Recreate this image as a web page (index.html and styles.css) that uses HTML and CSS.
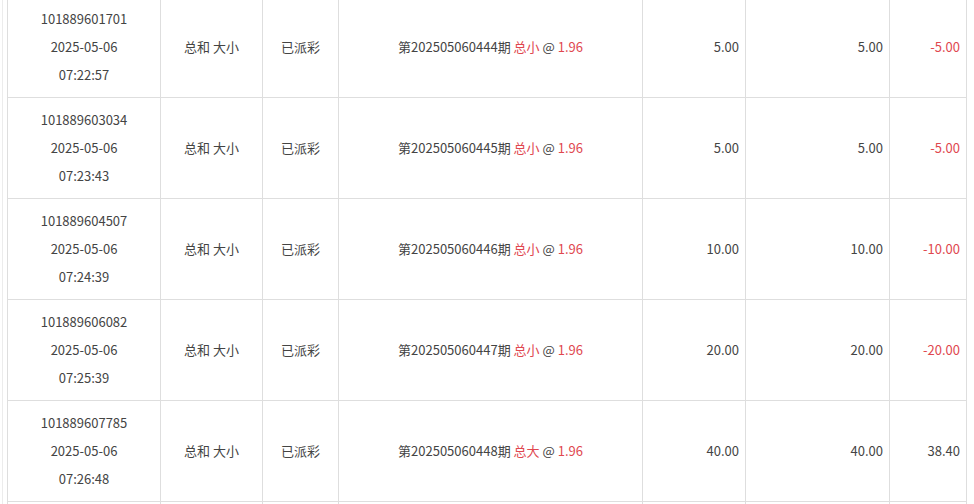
FILE: index.html
```html
<!DOCTYPE html>
<html lang="zh-CN">
<head>
<meta charset="utf-8">
<link rel="stylesheet" href="styles.css">
</head>
<body>
<div class="wrap">
<table class="bets">
<colgroup>
<col class="c1"><col class="c2"><col class="c3"><col class="c4"><col class="c5"><col class="c6"><col class="c7">
</colgroup>
<tbody>
<tr>
<td class="ctr"><div>101889601701</div><div>2025-05-06</div><div>07:22:57</div></td>
<td class="ctr">总和 大小</td>
<td class="ctr">已派彩</td>
<td class="ctr">第202505060444期 <span class="red">总小</span> @ <span class="red">1.96</span></td>
<td class="num">5.00</td>
<td class="num">5.00</td>
<td class="num red">-5.00</td>
</tr>
<tr>
<td class="ctr"><div>101889603034</div><div>2025-05-06</div><div>07:23:43</div></td>
<td class="ctr">总和 大小</td>
<td class="ctr">已派彩</td>
<td class="ctr">第202505060445期 <span class="red">总小</span> @ <span class="red">1.96</span></td>
<td class="num">5.00</td>
<td class="num">5.00</td>
<td class="num red">-5.00</td>
</tr>
<tr>
<td class="ctr"><div>101889604507</div><div>2025-05-06</div><div>07:24:39</div></td>
<td class="ctr">总和 大小</td>
<td class="ctr">已派彩</td>
<td class="ctr">第202505060446期 <span class="red">总小</span> @ <span class="red">1.96</span></td>
<td class="num">10.00</td>
<td class="num">10.00</td>
<td class="num red">-10.00</td>
</tr>
<tr>
<td class="ctr"><div>101889606082</div><div>2025-05-06</div><div>07:25:39</div></td>
<td class="ctr">总和 大小</td>
<td class="ctr">已派彩</td>
<td class="ctr">第202505060447期 <span class="red">总小</span> @ <span class="red">1.96</span></td>
<td class="num">20.00</td>
<td class="num">20.00</td>
<td class="num red">-20.00</td>
</tr>
<tr>
<td class="ctr"><div>101889607785</div><div>2025-05-06</div><div>07:26:48</div></td>
<td class="ctr">总和 大小</td>
<td class="ctr">已派彩</td>
<td class="ctr">第202505060448期 <span class="red">总大</span> @ <span class="red">1.96</span></td>
<td class="num">40.00</td>
<td class="num">40.00</td>
<td class="num">38.40</td>
</tr>
<tr>
<td></td><td></td><td></td><td></td><td></td><td></td><td></td>
</tr>
</tbody>
</table>
</div>
</body>
</html>
```
FILE: styles.css
```css
html, body {
  margin: 0;
  padding: 0;
  background: #fff;
  overflow: hidden;
}
.wrap {
  margin-left: 2px;
  padding-left: 4px;
  border-left: 1px solid #ececec;
  height: 504px;
  overflow: hidden;
}
.bets {
  border-collapse: collapse;
  table-layout: fixed;
  width: 959px;
  margin-top: -4px;
  font-family: "Noto Sans CJK SC", "Noto Sans", sans-serif;
  font-size: 13px;
  color: #444;
}
.c1 { width: 153px; }
.c2 { width: 102px; }
.c3 { width: 76px; }
.c4 { width: 304px; }
.c5 { width: 103px; }
.c6 { width: 144px; }
.c7 { width: 77px; }
.bets td {
  border: 1px solid #dedede;
  padding: 0 6px;
  line-height: 28px;
  vertical-align: middle;
  box-sizing: border-box;
  height: 101px;
}
.ctr { text-align: center; }
.num { text-align: right; }
.red { color: #e0474f; }
```
